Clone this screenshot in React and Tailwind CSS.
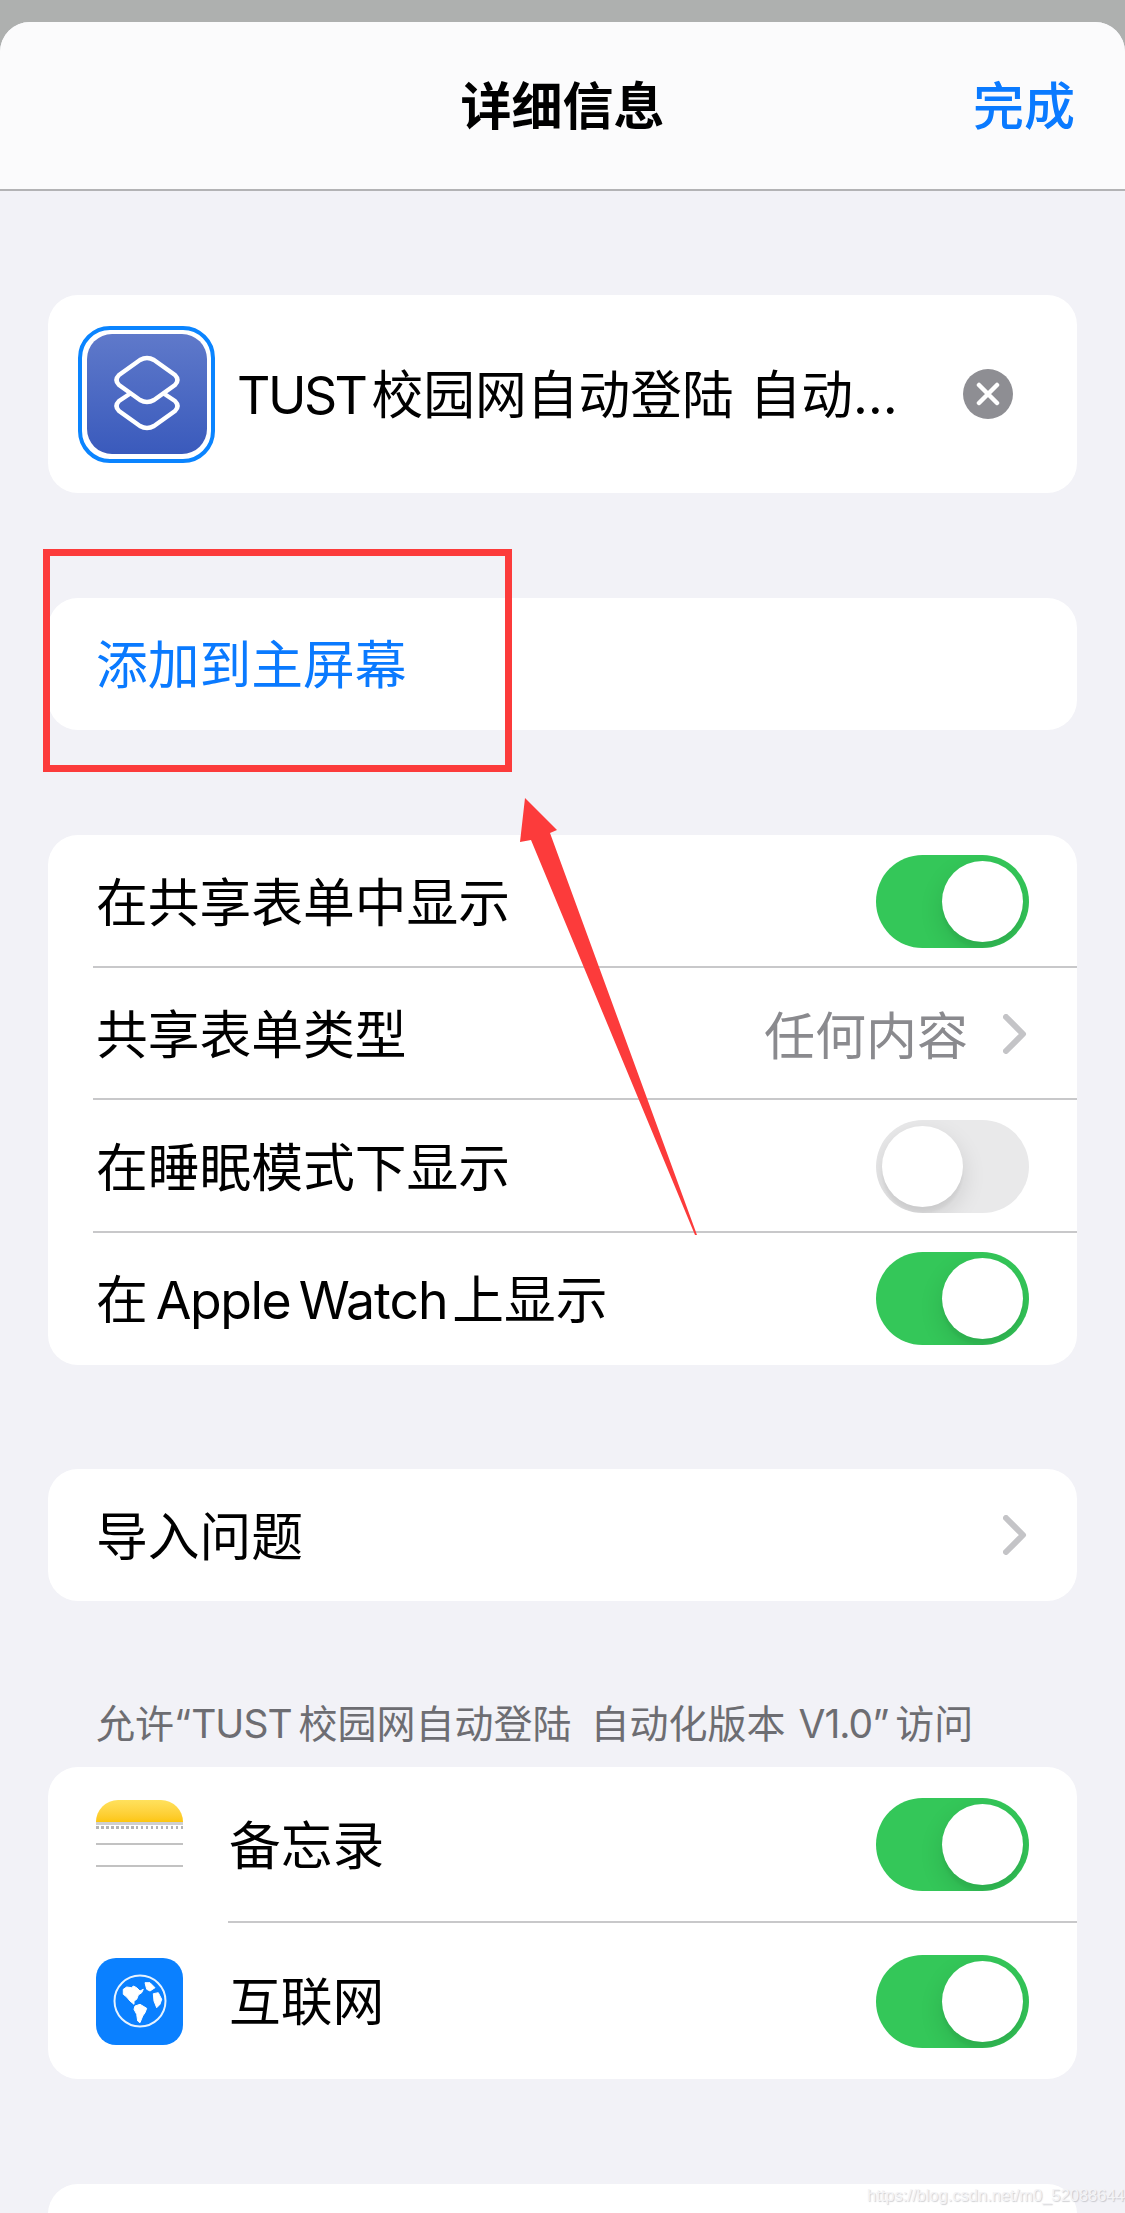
import React from "react";

const FONT = "font-['Inter','Noto_Sans_CJK_SC','Noto_Sans',sans-serif]";

function Toggle({ on }) {
  return (
    <div
      className={`relative h-[93px] w-[153px] shrink-0 overflow-hidden rounded-full ${
        on ? "bg-[#34c759]" : "bg-[#e9e9ea]"
      }`}
    >
      <div
        className={`absolute top-[6px] h-[81px] w-[81px] rounded-full bg-white shadow-[0_9px_24px_rgba(0,0,0,0.12),0_6px_3px_rgba(0,0,0,0.04)] ${
          on ? "right-[6px]" : "left-[6px]"
        }`}
      />
    </div>
  );
}

function Chevron() {
  return (
    <svg width="24" height="40" viewBox="0 0 24 40" className="shrink-0" fill="none">
      <path d="M3 3 L20 20 L3 37" stroke="#c4c4c7" strokeWidth="6" strokeLinecap="round" strokeLinejoin="round" />
    </svg>
  );
}

function Row({ label, children, divider }) {
  return (
    <div className="relative flex h-[132.5px] items-center justify-between pl-[48px] pr-[48px]">
      <span className="whitespace-nowrap pt-[5px] text-[51.75px] leading-none text-black">{label}</span>
      {children}
      {divider && <div className="absolute bottom-0 left-[45px] right-0 h-[2px] bg-[#c8c8ca]" />}
    </div>
  );
}

function ShortcutIcon() {
  return (
    <div className="flex h-[137px] w-[137px] shrink-0 items-center justify-center rounded-[32px] border-[4px] border-[#0a84ff] bg-white">
      <div className="flex h-[120px] w-[120px] items-center justify-center rounded-[25px] bg-gradient-to-b from-[#5f79ca] to-[#3a5abc]">
        <svg width="68" height="78" viewBox="0 0 68 78" fill="none">
          <path
            d="M50 38 L62 46 Q67 51 62 56 L41 71 Q34 75 27 71 L6 56 Q1 51 6 46 L18 38"
            stroke="white"
            strokeWidth="4.5"
            strokeLinejoin="round"
          />
          <path
            d="M27 5 Q34 1 41 5 L62 20 Q67 25 62 30 L41 45 Q34 49 27 45 L6 30 Q1 25 6 20 Z"
            stroke="white"
            strokeWidth="4.5"
            strokeLinejoin="round"
          />
        </svg>
      </div>
    </div>
  );
}

function NotesIcon() {
  return (
    <div className="flex h-[87px] w-[87px] shrink-0 flex-col overflow-hidden rounded-t-[22px] bg-white">
      <div className="h-[22px] shrink-0 bg-gradient-to-b from-[#ffe15c] to-[#fdc60a]" />
      <div className="h-[3px] shrink-0 bg-[#cfcfcf]" />
      <div className="mt-[1px] h-[3px] shrink-0 bg-[repeating-linear-gradient(90deg,#b4b4b4_0_2.5px,transparent_2.5px_5px)]" />
      <div className="mt-[14px] h-[2px] shrink-0 bg-[#c2c2c2]" />
      <div className="mt-[20px] h-[2px] shrink-0 bg-[#c2c2c2]" />
    </div>
  );
}

function GlobeIcon() {
  return (
    <div className="flex h-[87px] w-[87px] shrink-0 items-center justify-center rounded-[20px] bg-[#0a80ff]">
      <svg width="56" height="56" viewBox="0 0 56 56">
        <circle cx="28" cy="28" r="25.5" fill="none" stroke="white" strokeOpacity="0.9" strokeWidth="2" />
        <g fill="white" stroke="white" strokeWidth="1" strokeLinejoin="round">
          <path d="M11.3 16.3 L14.7 14 L19.7 14.7 L21.3 13 L24.7 14.7 L28 18 L31.3 16.3 L29.7 19.7 L26.3 22 L24.7 26.3 L22 28 L22 31.3 L18 28 L14.7 24 L11.3 21.3 Z" />
          <path d="M23 33 L28 31.3 L34.7 35.3 L33 39.7 L30.7 43 L28 49.7 L25.7 48 L24.7 41.3 L22 36.3 Z" />
          <path d="M33 9.7 L38 9.7 L43 14.7 L38 18 L34.7 16.3 Z" />
          <path d="M41.3 20.7 L46.3 19.7 L49.7 26.3 L48 31.3 L44.7 34.7 L42 28 Z" />
        </g>
      </svg>
    </div>
  );
}

export default function App() {
  return (
    <div className={`relative h-[2213px] w-[1125px] overflow-hidden bg-[#aeb0af] pt-[22px] ${FONT}`}>
      <div className="h-full overflow-hidden rounded-t-[30px] bg-[#f2f2f7]">
        {/* Sheet header */}
        <header className="relative flex h-[169px] items-center justify-center border-b-2 border-[#b3b3b5] bg-[#fbfbfc]">
          <span className="pt-[2px] text-[51px] font-semibold leading-none text-black">详细信息</span>
          <span className="absolute right-[50px] top-1/2 -translate-y-1/2 text-[51px] font-medium leading-none text-[#0a7aff]">完成</span>
        </header>

        <main className="px-[48px]">
          {/* Shortcut name */}
          <section className="mt-[104px] flex h-[198px] items-center rounded-[30px] bg-white pl-[30px] pr-[64px]">
            <ShortcutIcon />
            <span className="ml-[22px] flex-1 whitespace-nowrap pt-[3px] text-[51.75px] leading-none text-black">
              <span className="tracking-[-2.5px] [word-spacing:-6px]">TUST </span>
              校园网自动登陆
              <span className="[word-spacing:1px]"> </span>
              自动…
            </span>
            <div className="flex h-[50px] w-[50px] items-center justify-center rounded-full bg-[#8e8e93]">
              <svg width="24" height="24" viewBox="0 0 24 24">
                <path d="M3 3 L21 21 M21 3 L3 21" stroke="white" strokeWidth="4.5" strokeLinecap="round" />
              </svg>
            </div>
          </section>

          {/* Add to home screen */}
          <section className="mt-[105px] flex h-[132px] items-center rounded-[30px] bg-white pl-[48px]">
            <span className="pt-[3px] text-[51.75px] leading-none text-[#0a7aff]">添加到主屏幕</span>
          </section>

          {/* Share sheet and watch options */}
          <section className="mt-[105px] overflow-hidden rounded-[30px] bg-white">
            <Row label="在共享表单中显示" divider>
              <Toggle on />
            </Row>
            <Row label="共享表单类型" divider>
              <div className="flex items-center">
                <span className="pt-[5px] text-[51px] leading-none text-[#8a8a8e]">任何内容</span>
                <div className="ml-[35px] mr-[2px]">
                  <Chevron />
                </div>
              </div>
            </Row>
            <Row label="在睡眠模式下显示" divider>
              <Toggle />
            </Row>
            <Row
              label={
                <>
                  在<span className="tracking-[-1.5px] [word-spacing:-5px]"> Apple</span>
                  <span className="tracking-[-1px] [word-spacing:-5px]"> Watch</span>
                  <span className="[word-spacing:-10px]"> </span>上显示
                </>
              }
            >
              <Toggle on />
            </Row>
          </section>

          {/* Import questions */}
          <section className="mt-[104px] flex h-[132px] items-center justify-between rounded-[30px] bg-white pl-[48px] pr-[50px]">
            <span className="pt-[5px] text-[51.75px] leading-none text-black">导入问题</span>
            <Chevron />
          </section>

          {/* Permissions */}
          <p className="ml-[48px] mt-[103px] whitespace-nowrap text-[39px] leading-none text-[#6d6d72]">
            允许“<span className="tracking-[-1px] [word-spacing:-3px]">TUST </span>校园网自动登陆
            <span className="[word-spacing:8px]"> </span>自动化版本
            <span className="tracking-[-1px] [word-spacing:3px]"> V1.0</span>”<span className="ml-[6px]">访问</span>
          </p>
          <section className="mt-[24px] overflow-hidden rounded-[30px] bg-white">
            <div className="relative flex h-[156px] items-start justify-between pl-[48px] pr-[48px] pt-[31px]">
              <div className="mt-[2px]">
                <NotesIcon />
              </div>
              <span className="absolute left-[181px] top-[54px] text-[51.75px] leading-none text-black">备忘录</span>
              <Toggle on />
              <div className="absolute bottom-0 left-[180px] right-0 h-[2px] bg-[#c8c8ca]" />
            </div>
            <div className="flex h-[156px] items-center pl-[48px] pr-[48px]">
              <GlobeIcon />
              <span className="ml-[46px] flex-1 pt-[3px] text-[51.75px] leading-none text-black">互联网</span>
              <Toggle on />
            </div>
          </section>

          {/* Next group, cut off by the bottom of the sheet */}
          <section className="mt-[105px] h-[120px] rounded-[30px] bg-white" />
        </main>
      </div>

      {/* Annotation drawn over the sheet */}
      <div className="absolute left-[43px] top-[549px] h-[223px] w-[469px] border-[7px] border-[#fc3b3b]" />
      <svg className="absolute left-[500px] top-[780px]" width="220" height="470" viewBox="0 0 220 470">
        <path fill="#fc3b3b" d="M25 18 L57 50 L50 53 L197 455 L195 455 L31 60 L20 62 Z" />
      </svg>

      {/* Blog address stamped in the corner */}
      <span className="absolute left-[867px] top-[2185px] whitespace-nowrap font-['Liberation_Sans',sans-serif] text-[16.5px] leading-[20px] text-[#f4f4f6] [text-shadow:1px_1px_1px_rgba(120,120,130,0.35)]">
        https://blog.csdn.net/m0_52088644
      </span>
    </div>
  );
}
